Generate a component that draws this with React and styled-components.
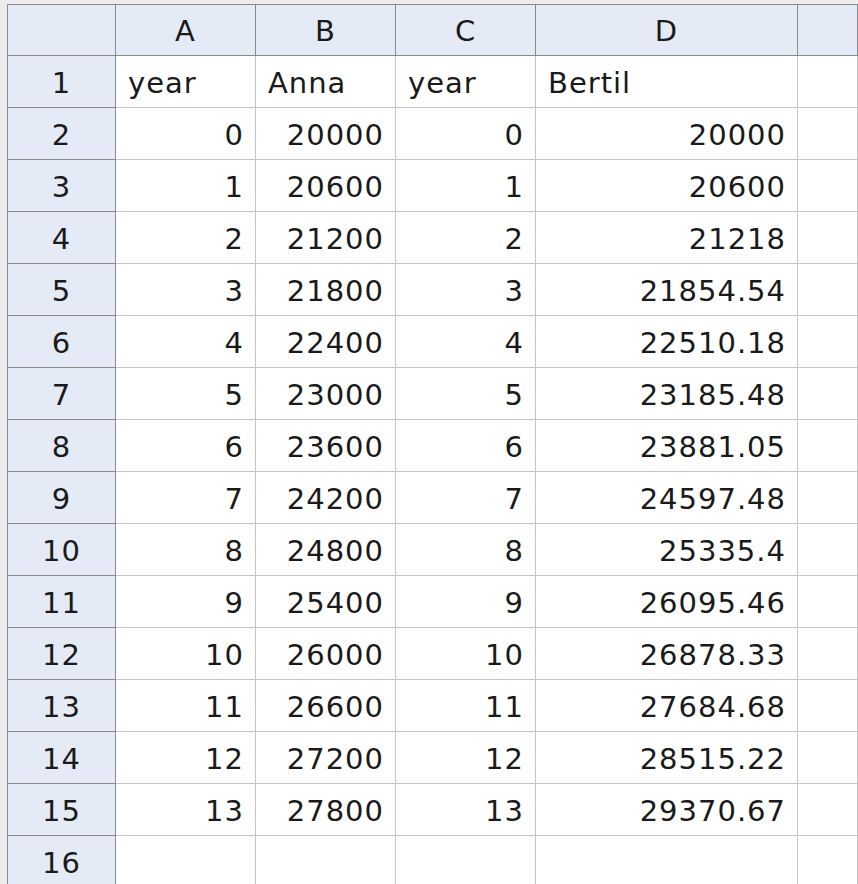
import React from 'react';
import styled, { createGlobalStyle } from 'styled-components';

const Global = createGlobalStyle`
  html, body { margin: 0; background: #ececec; }
  body { font-family: "DejaVu Sans", "Liberation Sans", sans-serif; }
`;

const cols = ['A', 'B', 'C', 'D', ''];
const anna = [20000, 20600, 21200, 21800, 22400, 23000, 23600, 24200, 24800, 25400, 26000, 26600, 27200, 27800];
const bertil = ['20000', '20600', '21218', '21854.54', '22510.18', '23185.48', '23881.05', '24597.48', '25335.4', '26095.46', '26878.33', '27684.68', '28515.22', '29370.67'];

const rows = [
  [{ v: 'year' }, { v: 'Anna' }, { v: 'year' }, { v: 'Bertil' }, { v: '' }],
  ...anna.map((a, i) => [
    { v: i, num: true }, { v: a, num: true }, { v: i, num: true }, { v: bertil[i], num: true }, { v: '' },
  ]),
  [{ v: '' }, { v: '' }, { v: '' }, { v: '' }, { v: '' }],
];

const Sheet = styled.div`
  padding: 4px 0 0 7px;
  height: 884px;
  box-sizing: border-box;
  overflow: hidden;
`;

const Grid = styled.div`
  display: grid;
  grid-template-columns: 108px 140px 140px 140px 262px 1fr;
  grid-auto-rows: 52px;
  grid-template-rows: 51px;
  border-top: 1px solid #8a8a8a;
  border-left: 1px solid #8a8a8a;
  background: #fff;
  font-size: 29px;
  letter-spacing: 1px;
  color: #1a1a1a;
`;

const Head = styled.div`
  background: #e4ebf6;
  border-right: 1px solid #8a8a8a;
  border-bottom: 1px solid #8a8a8a;
  display: flex;
  align-items: center;
  justify-content: center;
  padding-top: 2px;
`;

const Cell = styled.div`
  border-right: 1px solid #c4c4c4;
  border-bottom: 1px solid #c4c4c4;
  display: flex;
  align-items: center;
  justify-content: ${p => (p.$num ? 'flex-end' : 'flex-start')};
  padding: 2px 11px 0 12px;
  overflow: hidden;
  white-space: nowrap;
`;

export default function App() {
  return (
    <>
      <Global />
      <Sheet>
        <Grid>
          <Head />
          {cols.map((c, i) => <Head key={i}>{c}</Head>)}
          {rows.map((r, ri) => (
            <React.Fragment key={ri}>
              <Head>{ri + 1}</Head>
              {r.map((c, ci) => <Cell key={ci} $num={c.num}>{c.v}</Cell>)}
            </React.Fragment>
          ))}
        </Grid>
      </Sheet>
    </>
  );
}
